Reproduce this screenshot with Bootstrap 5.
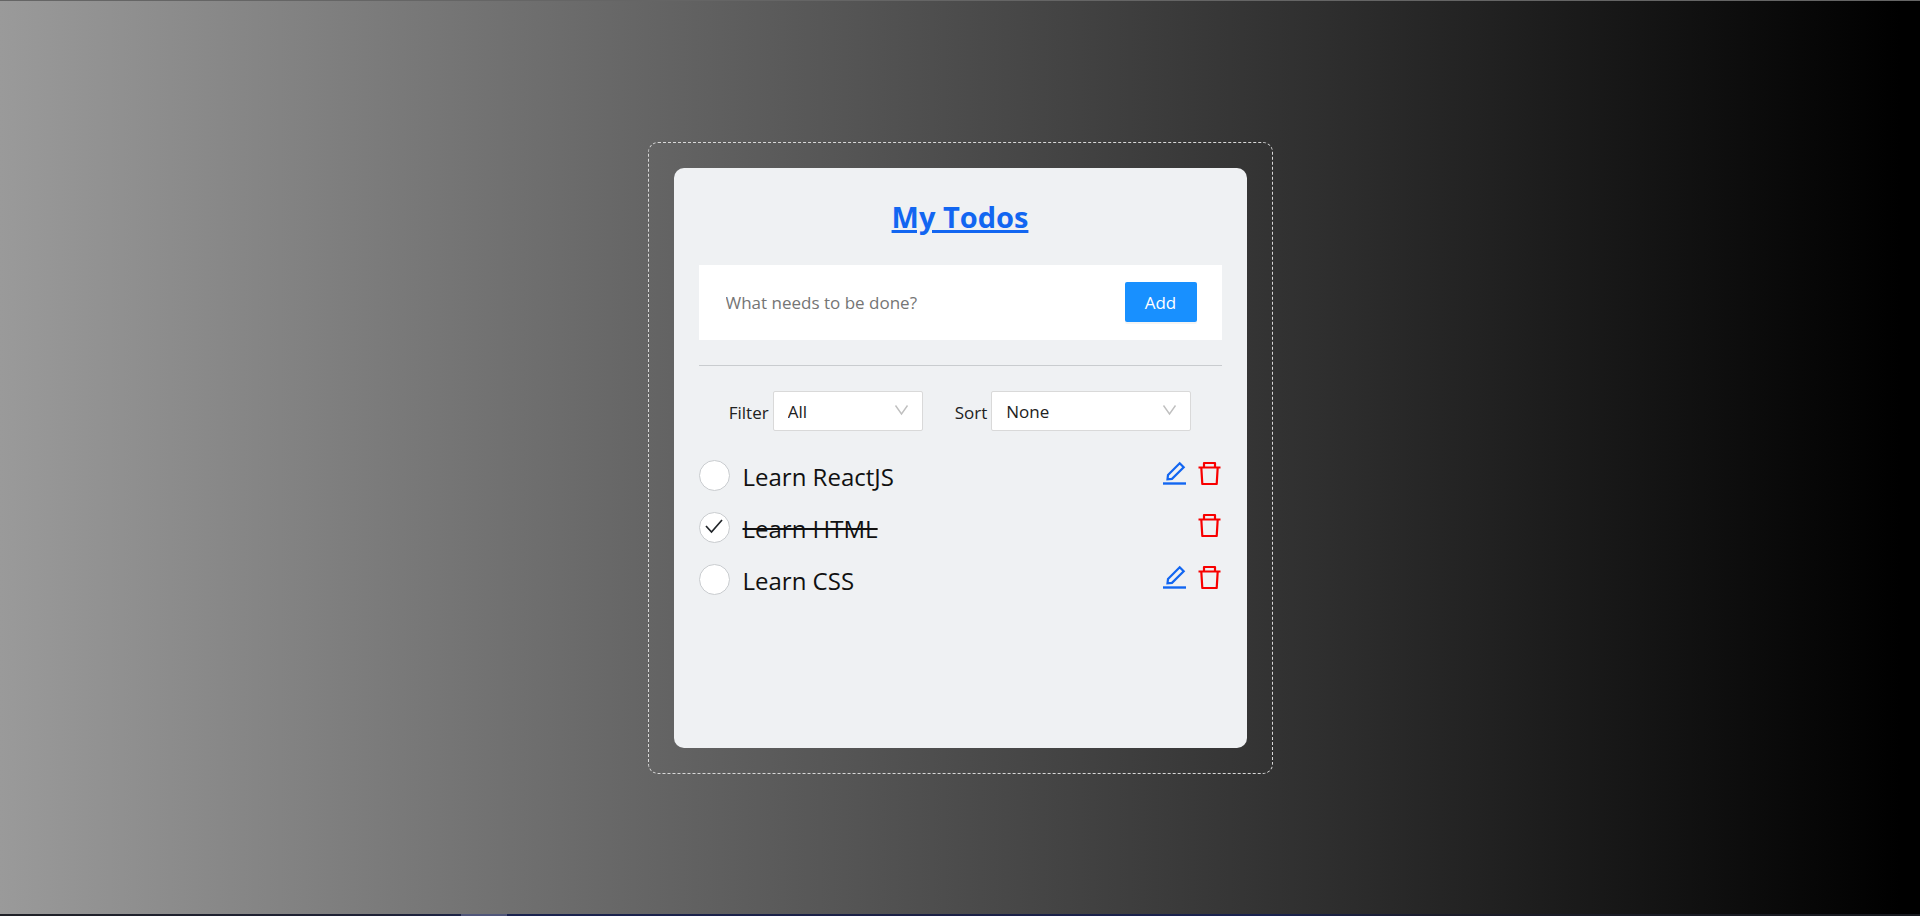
<!DOCTYPE html>
<html lang="en">
<head>
<meta charset="utf-8">
<meta name="viewport" content="width=device-width, initial-scale=1">
<title>My Todos</title>
<link rel="stylesheet" href="https://cdn.jsdelivr.net/npm/bootstrap@5.3.0/dist/css/bootstrap.min.css">
<style>
  body {
    font-family: "Open Sans", "Noto Sans", sans-serif;
    font-size: 17px;
    color: #212121;
    padding: 1px 0 2px;
    background:
      linear-gradient(#656565, #656565) top / 100% 1px no-repeat,
      linear-gradient(90deg, #1f2026 0%, #1e2136 20%, #1d2447 24%, #50567a 24%, #50567a 26.4%, #1a2350 26.4%, #1b2045 48%, #1a2350 66%, #1c1d2a 75%, #17191f 100%) bottom / 100% 2px no-repeat,
      linear-gradient(90deg, #9a9a9a 0%, #666 33%, #333 66%, #000 99%);
  }
  .todo-frame { width: 100%; max-width: 625px; padding: 25px; border: 1px dashed #d8d8d8; border-radius: 10px; }
  .todo-panel { min-height: 580px; padding: 25px; border-radius: 10px; background: #eff1f3; }
  .todo-title { font-size: 29px; line-height: 48px; font-weight: 700; color: #1266f1; text-decoration: underline; text-decoration-thickness: 3px; margin-bottom: 24px; }
  .add-form { padding: 17px 25px 18px; background: #fff; }
  .add-input { font-size: 17px; line-height: 24px; padding: 9px 2px 7px; border: 0; }
  .add-input::placeholder { color: #757575; }
  .btn-add { width: 72px; height: 40px; padding: 2px 0 0; font-size: 17px; line-height: 38px; border-radius: 2px; color: #fff; background: #1890ff; box-shadow: 0 2px 0 rgba(0, 0, 0, .045); }
  .btn-add:hover { color: #fff; background: #40a9ff; }
  .rule { height: 1px; margin: 25px 0; background: #c9cccf; opacity: 1; }
  .pickers { margin-bottom: 19px; }
  .picker { height: 40px; padding: 2px 14px 0; font-size: 17px; line-height: 36px; appearance: none; color: #212121; background: #fff; border: 1px solid #d9d9d9; border-radius: 2px; }
  .picker-filter { width: 150px; }
  .picker-sort { width: 200px; }
  .picker-arrow { position: absolute; right: 14px; top: 13px; width: 15px; height: 12px; pointer-events: none; }
  .todo-row { height: 52px; }
  .todo-check { appearance: none; width: 31px; height: 31px; margin: 0; border: 1px solid #c9cccf; border-radius: 50%; background: #fff; }
  .check-mark { position: absolute; left: 6px; top: 7px; width: 18px; height: 15px; pointer-events: none; }
  .todo-label { padding: 2px 0 0 13px; font-size: 24px; font-weight: 370; line-height: 36px; color: #111; }
  .todo-label.done span { text-decoration: line-through; text-decoration-thickness: 2px; }
  .row-tools { gap: 12px; margin-bottom: 6px; }
  .icon-btn { padding: 0; border: 0; background: none; line-height: 1; }
  .icon-btn svg { width: 24px; height: 24px; display: block; }
</style>
</head>
<body class="min-vh-100 d-flex align-items-center justify-content-center">
<svg class="d-none" aria-hidden="true">
  <symbol id="edit" viewBox="0 0 24 24"><path d="M1 22.500H24" stroke="#1266f1" stroke-width="2.400"/><path d="M17.700 2.200L21.700 6.200L10 17.900L5.500 18.300L6 13.900Z" fill="none" stroke="#1266f1" stroke-width="2.200"/></symbol>
  <symbol id="trash" viewBox="0 0 24 24"><g fill="none" stroke="#f80000" stroke-width="2.200" stroke-linejoin="round"><path d="M0.500 6.500H22.500M6 6.500V2H17V6.500M3.300 6.500L4.300 23H18.700L19.700 6.500"/></g></symbol>
  <symbol id="chevron" viewBox="0 0 15 12"><path d="M1.500 1.500L7.500 10L13.500 1.500" fill="none" stroke="#bfbfbf" stroke-width="1.400"/></symbol>
</svg>
<main class="todo-frame">
  <div class="todo-panel">
    <h1 class="todo-title text-center">My Todos</h1>
    <form class="add-form d-flex align-items-center">
      <input class="add-input form-control shadow-none flex-grow-1" type="text" placeholder="What needs to be done?" aria-label="What needs to be done?">
      <button class="btn btn-add border-0 flex-shrink-0" type="button">Add</button>
    </form>
    <hr class="rule border-0">
    <div class="pickers d-flex justify-content-center align-items-center flex-wrap">
      <label class="me-1 pt-1" for="filter">Filter</label>
      <div class="position-relative me-4">
        <select class="picker picker-filter" id="filter"><option>All</option><option>Completed</option><option>Active</option></select>
        <svg class="picker-arrow"><use href="#chevron"/></svg>
      </div>
      <label class="ms-2 me-1 pt-1" for="sort">Sort</label>
      <div class="position-relative">
        <select class="picker picker-sort" id="sort"><option>None</option><option>Added date</option></select>
        <svg class="picker-arrow"><use href="#chevron"/></svg>
      </div>
    </div>
    <ul class="list-unstyled mb-0">
      <li class="todo-row d-flex align-items-center">
        <input class="todo-check" type="checkbox" id="t1">
        <label class="todo-label" for="t1">Learn ReactJS</label>
        <div class="row-tools d-flex ms-auto">
          <button class="icon-btn" type="button" aria-label="Edit"><svg><use href="#edit"/></svg></button>
          <button class="icon-btn" type="button" aria-label="Delete"><svg><use href="#trash"/></svg></button>
        </div>
      </li>
      <li class="todo-row d-flex align-items-center">
        <span class="position-relative d-flex">
          <input class="todo-check" type="checkbox" id="t2" checked>
          <svg class="check-mark" viewBox="0 0 18 15"><path d="M1 7L6.500 13L17 1" fill="none" stroke="#212529" stroke-width="1.700"/></svg>
        </span>
        <label class="todo-label done" for="t2"><span>Learn HTML</span></label>
        <div class="row-tools d-flex ms-auto">
          <button class="icon-btn" type="button" aria-label="Delete"><svg><use href="#trash"/></svg></button>
        </div>
      </li>
      <li class="todo-row d-flex align-items-center">
        <input class="todo-check" type="checkbox" id="t3">
        <label class="todo-label" for="t3">Learn CSS</label>
        <div class="row-tools d-flex ms-auto">
          <button class="icon-btn" type="button" aria-label="Edit"><svg><use href="#edit"/></svg></button>
          <button class="icon-btn" type="button" aria-label="Delete"><svg><use href="#trash"/></svg></button>
        </div>
      </li>
    </ul>
  </div>
</main>
<script src="https://cdn.jsdelivr.net/npm/bootstrap@5.3.0/dist/js/bootstrap.bundle.min.js"></script>
</body>
</html>
